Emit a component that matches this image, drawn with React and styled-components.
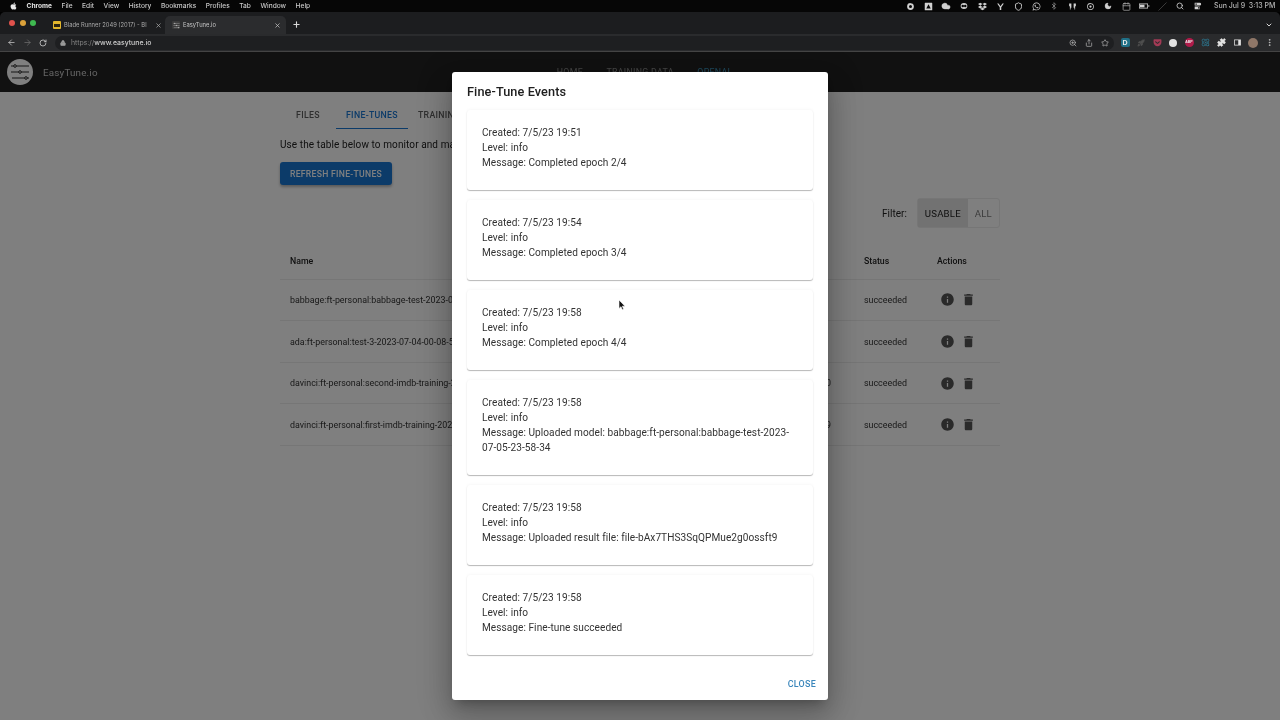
import React from "react";
import styled, { createGlobalStyle } from "styled-components";
import { ArrowLeft, ArrowRight, RotateCw, Lock, X, Plus, ChevronDown, ZoomIn, Share, Star, Puzzle, MoreVertical, Moon, Search, Slash, Bluetooth, Cloud, Shield, Calendar, Rocket, Atom } from "lucide-react";
import { FaApple, FaDropbox, FaWhatsapp, FaGetPocket } from "react-icons/fa";
import { MdInfo, MdDelete } from "react-icons/md";

const Global = createGlobalStyle`
  html, body { margin: 0; padding: 0; background: #000; }
  body { font-family: Roboto, "Liberation Sans", sans-serif; }
  * { box-sizing: border-box; }
`;

const Screen = styled.div`
  width: 1280px; height: 720px; overflow: hidden; display: flex; flex-direction: column; background: #000; filter: blur(0.35px);
`;
const MenuBar = styled.div`
  height: 12px; flex: none; display: flex; align-items: center; background: #060606; color: #c9c9c9;
  font: 500 6.6px/12px Inter, "Liberation Sans", sans-serif; padding-left: 10px;
`;
const MenuLeft = styled.div`display: flex; align-items: center; gap: 9.5px; flex: 1;`;
const MenuApple = styled.span`display: flex; width: 7px; color: #e8e8e8;`;
const MenuApp = styled.b`font-weight: 700; color: #e4e4e4;`;
const StatusIcons = styled.div`display: flex; align-items: center; transform: translateX(-1px);`;
const StatusSlot = styled.span`
  width: 18px; height: 12px; display: flex; align-items: center; justify-content: center; color: #d0d0d0;
`;
const Clock = styled.span`margin-left: 6px; width: 66px; color: #b5b5b5; font-size: 7px; white-space: nowrap;`;
const TabStrip = styled.div`
  height: 22px; flex: none; display: flex; align-items: flex-end; background: #1c1d1f; border-radius: 5px 5px 0 0; padding-left: 9px;
`;
const Lights = styled.div`display: flex; gap: 4.5px; align-self: center; margin-right: 9px;`;
const Light = styled.span`width: 6px; height: 6px; border-radius: 50%; background: ${p => p.$c};`;
const BrowserTab = styled.div`
  height: 18px; display: flex; align-items: center; width: ${p => p.$w}px; padding: 0 ${p => p.$pr}px 0 ${p => p.$pl}px; gap: 3px;
  border-radius: 5px 5px 0 0; background: ${p => p.$active ? "#2b2c2e" : "transparent"};
  color: ${p => p.$active ? "#c4c4c4" : "#a9a9a9"}; font: 400 5.8px/18px Inter, "Liberation Sans", sans-serif;
`;
const TabText = styled.span`flex: 1; white-space: nowrap; overflow: hidden;`;
const Favicon = styled.span`
  width: 8px; height: 8px; flex: none; border-radius: 1px; background: ${p => p.$c}; display: flex; align-items: center; justify-content: center;
`;
const FaviconBar = styled.span`width: 6px; height: 3px; background: #2b2410;`;
const StripAction = styled.span`display: flex; color: #d8d8d8; align-self: center; margin: 3px ${p => p.$mr || 0}px 0 ${p => p.$ml || 0}px;`;
const Spacer = styled.div`flex: 1;`;
const Toolbar = styled.div`
  height: 18px; flex: none; display: flex; align-items: center; background: #2a2b2d; border-bottom: 1px solid #444; padding-left: 3px; color: #c7c7c7;
`;
const NavSlot = styled.span`width: 16px; display: flex; justify-content: center; color: ${p => p.$c || "#c7c7c7"};`;
const UrlPill = styled.div`
  width: 1059px; height: 14px; margin: 0 3px 0 4px; border-radius: 7px; background: #1e1f21; display: flex; align-items: center; padding-left: 5px; gap: 5px;
  font: 500 6.9px/14px Inter, "Liberation Sans", sans-serif; color: #d0d0d0; flex: none;
`;
const UrlScheme = styled.span`color: #858585; font-weight: 400;`;
const UrlIcons = styled.div`margin-left: auto; display: flex; align-items: center; padding-right: 1px;`;
const ToolSlot = styled.span`width: 16px; height: 14px; display: flex; align-items: center; justify-content: center; color: ${p => p.$c || "#bdbdbd"};`;
const ExtBadge = styled.span`
  width: ${p => p.$s || 9}px; height: ${p => p.$s || 9}px; border-radius: ${p => p.$r || "50%"}; background: ${p => p.$c};
  color: #e8e8e8; font: 700 ${p => p.$f || 3.5}px/${p => p.$s || 9}px "Liberation Sans", sans-serif; text-align: center; display: block;
`;
const Page = styled.div`position: relative; flex: 1; min-height: 0; background: #fff; overflow: hidden; display: flex; flex-direction: column;`;
const AppBar = styled.header`
  height: 40px; flex: none; background: #232323; display: grid; grid-template-columns: 1fr auto 1fr; align-items: center; padding-left: 7px;
`;
const Brand = styled.div`display: flex; align-items: center; gap: 10px; color: #c8c8c8; font-size: 9.8px; letter-spacing: .2px;`;
const Logo = styled.span`width: 26px; height: 26px; border-radius: 50%; background: #fff; display: flex; align-items: center; justify-content: center;`;
const Nav = styled.nav`display: flex; gap: 23.5px; font-size: 8.8px; letter-spacing: .3px; color: #8c8c8c;`;
const NavItem = styled.span`color: ${p => p.$active ? "#3e95be" : "inherit"};`;
const Content = styled.main`width: 720px; margin: 0 auto; flex: 1; padding-top: 8px;`;
const Tabs = styled.div`display: flex; height: 29px;`;
const TabItem = styled.div`
  min-width: 56px; padding: 0 10px; display: flex; align-items: center; justify-content: center; height: 29px; white-space: nowrap;
  font-size: 8.75px; font-weight: 500; letter-spacing: .3px; color: ${p => p.$active ? "#1976d2" : "#5f5f5f"};
  border-top: 1.5px solid transparent;
  border-bottom: 1.5px solid ${p => p.$active ? "#1976d2" : "transparent"};
`;
const Intro = styled.p`margin: 8px 0 0; font-size: 10px; line-height: 15px; color: #222; letter-spacing: .1px; white-space: nowrap;`;
const RefreshButton = styled.button`
  display: block; margin-top: 10px; width: 112px; height: 23px; border: 0; border-radius: 3px; background: #1976d2; color: #fff;
  font: 500 8.6px Roboto, sans-serif; letter-spacing: .3px; box-shadow: 0 2px 3px rgba(0,0,0,.3); padding: 0;
`;
const FilterRow = styled.div`display: flex; justify-content: flex-end; align-items: center; gap: 10px; margin-top: 13px; color: #222; font-size: 10px;`;
const Toggle = styled.div`display: flex; height: 30px; border: 1px solid #ececec; border-radius: 3px; font-size: 9.6px; letter-spacing: .2px;`;
const ToggleItem = styled.span`
  display: flex; align-items: center; padding: 0 7px; color: ${p => p.$on ? "#222" : "#7b7b7b"}; background: ${p => p.$on ? "#e4e4e4" : "transparent"};
`;
const HeadRow = styled.div`
  display: grid; grid-template-columns: 520px 54px 73px 73px; height: 51.7px; align-items: center; padding: 15px 0 0 10px; border-bottom: 1px solid #ececec;
  font-size: 8.75px; font-weight: 500; color: #222;
`;
const Row = styled.div`
  display: grid; grid-template-columns: 520px 54px 73px 73px; height: 41.6px; align-items: center; padding-left: 10px; border-bottom: 1px solid #ececec;
  font-size: 8.88px; color: #333; white-space: nowrap;
`;
const NumCell = styled.span`text-align: right; padding-right: 33px;`;
const Actions = styled.span`display: flex; align-items: center; gap: 6px; color: #555; padding-left: 2.5px;`;
const Backdrop = styled.div`
  position: absolute; inset: 0; background: rgba(0,0,0,.5); display: flex; justify-content: center; align-items: center;
`;
const Dialog = styled.section`
  width: 376px; height: 628px; background: #fff; border-radius: 3px; display: flex; flex-direction: column;
  box-shadow: 0 7px 10px -5px rgba(0,0,0,.25), 0 16px 28px 3px rgba(0,0,0,.16), 0 6px 34px 5px rgba(0,0,0,.14);
`;
const DialogTitle = styled.h2`margin: 0; height: 38px; flex: none; padding: 12px 15px 0; font-size: 12.7px; line-height: 16px; font-weight: 500; color: #202020; letter-spacing: .1px;`;
const EventList = styled.div`flex: 1; padding: 0 15px; display: flex; flex-direction: column; gap: 10px;`;
const EventCard = styled.article`
  flex: none; padding: 14.5px 15px 20.5px; border-radius: 3px; background: #fff; font-size: 10.1px; line-height: 15px; color: #333; letter-spacing: .05px;
  box-shadow: 0 1px 1px rgba(0,0,0,.28), 0 -1px 3px rgba(0,0,0,.03);
`;
const EventLine = styled.div``;
const DialogActions = styled.footer`height: 36px; flex: none; display: flex; justify-content: flex-end; align-items: flex-start; padding: 14px 12px 0 0;`;
const CloseButton = styled.button`border: 0; background: none; padding: 0; font: 500 8.9px/12px Roboto, sans-serif; letter-spacing: .3px; color: #3a86bb;`;
const Pointer = styled.svg`position: absolute; left: 618px; top: 248px; pointer-events: none;`;

const events = [
  ["7/5/23 19:51", "Completed epoch 2/4"],
  ["7/5/23 19:54", "Completed epoch 3/4"],
  ["7/5/23 19:58", "Completed epoch 4/4"],
  ["7/5/23 19:58", "Uploaded model: babbage:ft-personal:babbage-test-2023-07-05-23-58-34"],
  ["7/5/23 19:58", "Uploaded result file: file-bAx7THS3SqQPMue2g0ossft9"],
  ["7/5/23 19:58", "Fine-tune succeeded"],
];
const rows = [
  ["babbage:ft-personal:babbage-test-2023-07-05-23-58-34", ""],
  ["ada:ft-personal:test-3-2023-07-04-00-08-52", ""],
  ["davinci:ft-personal:second-imdb-training-2023-06-30", "0"],
  ["davinci:ft-personal:first-imdb-training-2023-06-29", "9"],
];
const menus = ["File", "Edit", "View", "History", "Bookmarks", "Profiles", "Tab", "Window", "Help"];

const Glyph = ({ children, s = 9 }) => <svg width={s} height={s} viewBox="0 0 24 24" fill="currentColor">{children}</svg>;

const status = [
  <Glyph><path fillRule="evenodd" d="M12 3a9 9 0 1 0 0 18 9 9 0 0 0 0-18zm0 5a4 4 0 1 1 0 8 4 4 0 0 1 0-8z" /></Glyph>,
  <Glyph><path fillRule="evenodd" d="M3 2h18a1 1 0 0 1 1 1v18a1 1 0 0 1-1 1H3a1 1 0 0 1-1-1V3a1 1 0 0 1 1-1zm9 4-6 11h12z" /></Glyph>,
  <Cloud size={10} fill="currentColor" strokeWidth={1} />,
  <Glyph s={10}><path fillRule="evenodd" d="M12 5a8 7 0 1 0 0 14 8 7 0 0 0 0-14zm-3 4a3 3 0 1 1 0 6 3 3 0 0 1 0-6zm6 0a3 3 0 1 1 0 6 3 3 0 0 1 0-6z" /></Glyph>,
  <FaDropbox size={9} />,
  <Glyph><path d="M3 4h4l5 7 5-7h4l-7 10v7h-4v-7z" /></Glyph>,
  <Shield size={9} strokeWidth={2.4} />,
  <FaWhatsapp size={9} />,
  <Bluetooth size={8} strokeWidth={2} color="#999" />,
  <Glyph><path d="M3 4h6v11H7v5H5v-9H3zM15 4h6v7h-2v9h-2v-5h-2z" /></Glyph>,
  <Glyph><path fillRule="evenodd" d="M12 3a9 9 0 1 0 0 18 9 9 0 0 0 0-18zm0 2a7 7 0 1 1 0 14 7 7 0 0 1 0-14zm0 4a3 3 0 1 1 0 6 3 3 0 0 1 0-6z" /></Glyph>,
  <Moon size={8} fill="currentColor" strokeWidth={1} />,
  <Calendar size={9} strokeWidth={2} color="#aaa" />,
  <Glyph s={12}><path fillRule="evenodd" d="M2 7h18v10H2zm1.500 1.500v7h15v-7zM4 9.500h9v5H4zM21 10h1.500v4H21z" /></Glyph>,
  <Slash size={9} strokeWidth={1.5} color="#666" />,
  <Search size={8} strokeWidth={2.5} />,
  <Glyph s={10}><path fillRule="evenodd" d="M4 4h12a3 3 0 0 1 0 7H4zM6 6v3h3V6zM4 13h12v7H4zm8 2v3h3v-3z" /></Glyph>,
];

const LogoMark = ({ s = 20, c = "#2a2a2a", k = "#fff" }) => (
  <svg width={s} height={s} viewBox="0 0 20 20" stroke={c} strokeWidth="1" fill="none">
    <path d="M1 4h18M1 10h18M2 16h17" />
    <circle cx="5" cy="4" r="1.300" fill={k} /><circle cx="10" cy="10" r="1.300" fill={k} /><circle cx="16" cy="16" r="1.300" fill={k} />
  </svg>
);

export default function App() {
  return (
    <Screen>
      <Global />
      <MenuBar>
        <MenuLeft>
          <MenuApple><FaApple size={8} /></MenuApple>
          <MenuApp>Chrome</MenuApp>
          {menus.map(m => <span key={m}>{m}</span>)}
        </MenuLeft>
        <StatusIcons>
          {status.map((s, i) => <StatusSlot key={i}>{s}</StatusSlot>)}
        </StatusIcons>
        <Clock>Sun Jul 9&nbsp; 3:13 PM</Clock>
      </MenuBar>
      <TabStrip>
        <Lights>
          <Light $c="#e0524c" /><Light $c="#dba13a" /><Light $c="#3fb950" />
        </Lights>
        <BrowserTab $w={120} $pl={8} $pr={3}>
          <Favicon $c="#e2b62c"><FaviconBar /></Favicon>
          <TabText>Blade Runner 2049 (2017) - Bl</TabText>
          <X size={7} strokeWidth={2.5} />
        </BrowserTab>
        <BrowserTab $active $w={121} $pl={7} $pr={5}>
          <Favicon $c="#3a3a3a"><LogoMark s={7} c="#ccc" k="#ccc" /></Favicon>
          <TabText>EasyTune.io</TabText>
          <X size={7} strokeWidth={2.5} />
        </BrowserTab>
        <StripAction $ml={6}><Plus size={9} strokeWidth={3} /></StripAction>
        <Spacer />
        <StripAction $mr={7}><ChevronDown size={8} strokeWidth={3} /></StripAction>
      </TabStrip>
      <Toolbar>
        <NavSlot><ArrowLeft size={9} strokeWidth={2} /></NavSlot>
        <NavSlot $c="#6d6d6d"><ArrowRight size={9} strokeWidth={2} /></NavSlot>
        <NavSlot><RotateCw size={8} strokeWidth={2.5} /></NavSlot>
        <UrlPill>
          <Lock size={6} strokeWidth={2.5} color="#9a9a9a" fill="#9a9a9a" />
          <span><UrlScheme>https://</UrlScheme>www.easytune.io</span>
          <UrlIcons>
            <ToolSlot><ZoomIn size={8} strokeWidth={2} /></ToolSlot>
            <ToolSlot><Share size={8} strokeWidth={2} /></ToolSlot>
            <ToolSlot><Star size={8} strokeWidth={2} /></ToolSlot>
          </UrlIcons>
        </UrlPill>
        <ToolSlot><ExtBadge $c="#1f6f86" $r="2px" $f={7}>D</ExtBadge></ToolSlot>
        <ToolSlot $c="#4f4f4f"><Rocket size={8} fill="currentColor" /></ToolSlot>
        <ToolSlot $c="#a33a55"><FaGetPocket size={9} /></ToolSlot>
        <ToolSlot><ExtBadge $c="#e2e2e2" $s={8} /></ToolSlot>
        <ToolSlot><ExtBadge $c="#b01b4a">ABP</ExtBadge></ToolSlot>
        <ToolSlot $c="#2b7a94"><Atom size={9} strokeWidth={2} /></ToolSlot>
        <ToolSlot $c="#e4e4e4"><Puzzle size={9} fill="currentColor" /></ToolSlot>
        <ToolSlot $c="#e4e4e4"><Glyph><path fillRule="evenodd" d="M3 4h18v16H3zm2 2v12h9V6z" /></Glyph></ToolSlot>
        <ToolSlot><ExtBadge $c="#8f7768" $s={10} /></ToolSlot>
        <ToolSlot><MoreVertical size={9} strokeWidth={2.5} /></ToolSlot>
      </Toolbar>
      <Page>
        <AppBar>
          <Brand>
            <Logo><LogoMark /></Logo>
            EasyTune.io
          </Brand>
          <Nav>
            <NavItem>HOME</NavItem>
            <NavItem>TRAINING DATA</NavItem>
            <NavItem $active>OPENAI</NavItem>
          </Nav>
          <span />
        </AppBar>
        <Content>
          <Tabs>
            <TabItem>FILES</TabItem>
            <TabItem $active>FINE-TUNES</TabItem>
            <TabItem>TRAINING JOBS</TabItem>
          </Tabs>
          <Intro>Use the table below to monitor and manage your fine-tunes.</Intro>
          <RefreshButton>REFRESH FINE-TUNES</RefreshButton>
          <FilterRow>
            Filter:
            <Toggle>
              <ToggleItem $on>USABLE</ToggleItem>
              <ToggleItem>ALL</ToggleItem>
            </Toggle>
          </FilterRow>
          <HeadRow><span>Name</span><span /><span>Status</span><span>Actions</span></HeadRow>
          {rows.map(([name, n]) => (
            <Row key={name}>
              <span>{name}</span>
              <NumCell>{n}</NumCell>
              <span>succeeded</span>
              <Actions><MdInfo size={15} /><MdDelete size={15} /></Actions>
            </Row>
          ))}
        </Content>
        <Backdrop>
          <Dialog>
            <DialogTitle>Fine-Tune Events</DialogTitle>
            <EventList>
              {events.map(([created, msg], i) => (
                <EventCard key={i}>
                  <EventLine>{`Created: ${created}`}</EventLine>
                  <EventLine>Level: info</EventLine>
                  <EventLine>{`Message: ${msg}`}</EventLine>
                </EventCard>
              ))}
            </EventList>
            <DialogActions><CloseButton>CLOSE</CloseButton></DialogActions>
          </Dialog>
        </Backdrop>
        <Pointer width="8" height="11" viewBox="0 0 8 11">
          <path d="M1 0v8.500l2-1.800 1.300 3 1.300-.6-1.300-2.900H7z" fill="#111" stroke="#fff" strokeWidth=".6" />
        </Pointer>
      </Page>
    </Screen>
  );
}
